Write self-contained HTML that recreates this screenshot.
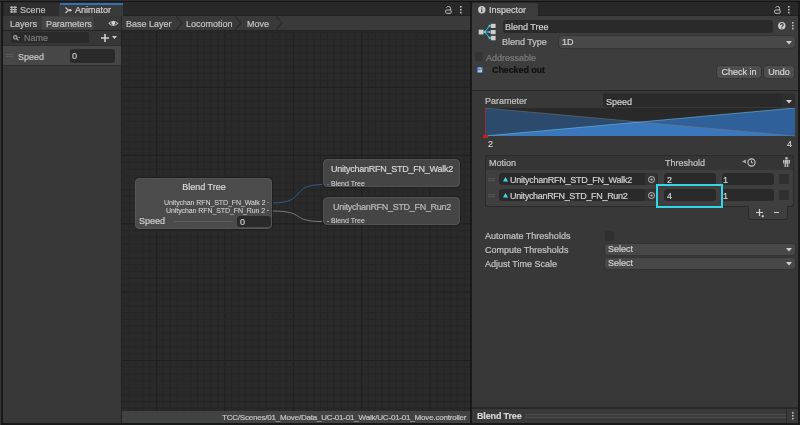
<!DOCTYPE html>
<html><head><meta charset="utf-8"><style>
html,body{margin:0;padding:0}
body{width:800px;height:425px;background:#191919;position:relative;overflow:hidden;font-family:"Liberation Sans",sans-serif}
body div, body svg{position:absolute}
.t{white-space:nowrap;-webkit-text-stroke:0.2px currentColor}
body>div.t{will-change:transform}
svg *{position:static}
</style></head><body>
<div style="left:0px;top:0px;width:800px;height:1px;background:#2e2e2e;"></div>
<div style="left:0px;top:0px;width:1px;height:425px;background:#363636;"></div>
<div style="left:0px;top:1px;width:800px;height:1px;background:#151515;"></div>
<div style="left:3px;top:2px;width:467px;height:13px;background:#282828;"></div>
<div style="left:3px;top:15px;width:467px;height:1px;background:#232323;"></div>
<div style="left:4px;top:3px;width:54.5px;height:12.5px;background:#2e2e2e;border-radius:2px 2px 0 0"></div>
<div style="left:59.3px;top:3px;width:63.5px;height:13px;background:#3a3a3a;border-radius:2px 2px 0 0"></div>
<div style="left:59.5px;top:3px;width:63px;height:2px;background:#3370b2;"></div>
<svg style="left:9.5px;top:6.1px" width="7" height="7" viewBox="0 0 7 7"><g stroke="#c4c4c4" stroke-width="1" fill="none"><path d="M0 1.3H7M0 3.6H7M0 5.9H7M1.8 0V7M4.9 0V7"/></g></svg>
<div class="t" style="top:6px;font-size:9px;line-height:9px;color:#bdbdbd;left:20.3px;">Scene</div>
<svg style="left:65px;top:6.5px" width="7" height="7" viewBox="0 0 7 7"><g stroke="#c8c8c8" stroke-width="1.2" fill="none"><path d="M0.5 0.5L3.5 3.2L0.5 6M3.5 3.2H6"/></g><circle cx="5.3" cy="3.2" r="1.3" fill="#c8c8c8"/></svg>
<div class="t" style="top:6px;font-size:9px;line-height:9px;color:#d2d2d2;left:75px;">Animator</div>
<svg style="left:445px;top:5.5px" width="8" height="8" viewBox="0 0 8 8"><g stroke="#bdbdbd" stroke-width="1" fill="none"><path d="M1.4 1.6Q2 0.5 3.6 0.5Q5.6 0.5 5.6 2.4V4"/><rect x="0.6" y="4" width="5.6" height="3.3" rx="1"/></g></svg>
<svg style="left:460px;top:6px" width="2" height="8" viewBox="0 0 2 8"><g fill="#bdbdbd"><rect x="0" y="0" width="1.6" height="1.6"/><rect x="0" y="2.9" width="1.6" height="1.6"/><rect x="0" y="5.8" width="1.6" height="1.6"/></g></svg>
<div style="left:3px;top:16px;width:467px;height:14px;background:#3c3c3c;"></div>
<div style="left:3px;top:16px;width:118px;height:14px;background:#383838;"></div>
<div style="left:6px;top:16px;width:34px;height:14px;background:#3a3a3a;"></div>
<div style="left:41.3px;top:16px;width:52.7px;height:14px;background:#454545;box-shadow:inset 0 0 0 0.6px #3a3a3a"></div>
<div class="t" style="top:19.5px;font-size:9px;line-height:9px;color:#c4c4c4;left:9.75px;">Layers</div>
<div class="t" style="top:19.5px;font-size:9px;line-height:9px;color:#c4c4c4;letter-spacing:-0.08px;left:46.0px;">Parameters</div>
<svg style="left:107.7px;top:20.3px" width="11" height="7" viewBox="0 0 11 7"><path d="M0.2 3.3Q5.3 -2 10.5 3.3Q5.3 8.6 0.2 3.3Z" fill="#cfcfcf"/><path d="M1.6 3.3Q5.3 -0.6 9.1 3.3Q5.3 7.2 1.6 3.3Z" fill="#3a3a3a"/><circle cx="5.3" cy="2.9" r="2" fill="#d4d4d4"/></svg>
<div style="left:121px;top:16px;width:1px;height:14px;background:#2a2a2a;"></div>
<div style="left:122px;top:16px;width:348px;height:14px;background:#3a3a3a;"></div>
<div class="t" style="top:20px;font-size:9px;line-height:9px;color:#c4c4c4;left:125.5px;">Base Layer</div>
<div class="t" style="top:20px;font-size:9px;line-height:9px;color:#c4c4c4;left:185.5px;">Locomotion</div>
<div class="t" style="top:20px;font-size:9px;line-height:9px;color:#c4c4c4;left:247.3px;">Move</div>
<svg style="left:175.7px;top:16px" width="7" height="14" viewBox="0 0 7 14"><path d="M0 0L6 7L0 14" stroke="#2a2a2a" stroke-width="1.2" fill="none"/></svg>
<svg style="left:235.2px;top:16px" width="7" height="14" viewBox="0 0 7 14"><path d="M0 0L6 7L0 14" stroke="#2a2a2a" stroke-width="1.2" fill="none"/></svg>
<svg style="left:276px;top:16px" width="7" height="14" viewBox="0 0 7 14"><path d="M0 0L6 7L0 14" stroke="#2a2a2a" stroke-width="1.2" fill="none"/></svg>
<div style="left:3px;top:30px;width:467px;height:1px;background:#242424;"></div>
<div style="left:3px;top:31px;width:118px;height:392px;background:#383838;"></div>
<div style="left:3px;top:31px;width:118px;height:14px;background:#363636;"></div>
<div style="left:10.5px;top:32.2px;width:78px;height:10.8px;background:#2a2a2a;border-radius:3px"></div>
<svg style="left:12px;top:34px" width="9" height="8" viewBox="0 0 9 8"><circle cx="3.3" cy="3.3" r="1.7" stroke="#b0b0b0" stroke-width="1.1" fill="none"/><path d="M4.4 4.4L6.4 6.4" stroke="#b0b0b0" stroke-width="1.2"/><rect x="6.4" y="3" width="1.6" height="0.9" fill="#9a9a9a"/></svg>
<div class="t" style="top:34.2px;font-size:9px;line-height:9px;color:#7b7b7b;left:23.7px;">Name</div>
<svg style="left:101px;top:33.5px" width="8" height="8" viewBox="0 0 8 8"><path d="M4 0V8M0 4H8" stroke="#cfcfcf" stroke-width="1.6"/></svg>
<svg style="left:112px;top:36px" width="5" height="3" viewBox="0 0 5 3"><path d="M0 0H5L2.5 3Z" fill="#cfcfcf"/></svg>
<div style="left:3px;top:45px;width:118px;height:1px;background:#2e2e2e;"></div>
<div style="left:3px;top:46px;width:118px;height:19px;background:#474747;"></div>
<div style="left:6px;top:53.5px;width:7px;height:0.8px;background:#5a5a5a;"></div>
<div style="left:6px;top:55.5px;width:7px;height:0.8px;background:#5a5a5a;"></div>
<div class="t" style="top:52.5px;font-size:9px;line-height:9px;color:#c8c8c8;left:17.8px;">Speed</div>
<div style="left:70px;top:49px;width:45px;height:14px;background:#2a2a2a;border-radius:3px"></div>
<div class="t" style="top:51.5px;font-size:9px;line-height:9px;color:#c8c8c8;left:72px;">0</div>
<div style="left:3px;top:65px;width:118px;height:1px;background:#2e2e2e;"></div>
<div style="left:121px;top:31px;width:1px;height:392px;background:#232323;"></div>
<div style="left:122px;top:31px;width:348px;height:379.5px;background:#2a2a2a;overflow:hidden">
<svg width="348" height="380" style="left:0;top:0"><rect x="-0.08" y="0" width="1" height="380" fill="#262626"/><rect x="6.76" y="0" width="1" height="380" fill="#262626"/><rect x="13.59" y="0" width="1" height="380" fill="#262626"/><rect x="20.43" y="0" width="1" height="380" fill="#262626"/><rect x="27.26" y="0" width="1" height="380" fill="#262626"/><rect x="34.10" y="0" width="1" height="380" fill="#1f1f1f"/><rect x="40.94" y="0" width="1" height="380" fill="#262626"/><rect x="47.77" y="0" width="1" height="380" fill="#262626"/><rect x="54.60" y="0" width="1" height="380" fill="#262626"/><rect x="61.44" y="0" width="1" height="380" fill="#262626"/><rect x="68.27" y="0" width="1" height="380" fill="#262626"/><rect x="75.11" y="0" width="1" height="380" fill="#262626"/><rect x="81.94" y="0" width="1" height="380" fill="#262626"/><rect x="88.78" y="0" width="1" height="380" fill="#262626"/><rect x="95.62" y="0" width="1" height="380" fill="#262626"/><rect x="102.45" y="0" width="1" height="380" fill="#1f1f1f"/><rect x="109.28" y="0" width="1" height="380" fill="#262626"/><rect x="116.12" y="0" width="1" height="380" fill="#262626"/><rect x="122.95" y="0" width="1" height="380" fill="#262626"/><rect x="129.79" y="0" width="1" height="380" fill="#262626"/><rect x="136.62" y="0" width="1" height="380" fill="#262626"/><rect x="143.46" y="0" width="1" height="380" fill="#262626"/><rect x="150.29" y="0" width="1" height="380" fill="#262626"/><rect x="157.13" y="0" width="1" height="380" fill="#262626"/><rect x="163.97" y="0" width="1" height="380" fill="#262626"/><rect x="170.80" y="0" width="1" height="380" fill="#1f1f1f"/><rect x="177.63" y="0" width="1" height="380" fill="#262626"/><rect x="184.47" y="0" width="1" height="380" fill="#262626"/><rect x="191.31" y="0" width="1" height="380" fill="#262626"/><rect x="198.14" y="0" width="1" height="380" fill="#262626"/><rect x="204.98" y="0" width="1" height="380" fill="#262626"/><rect x="211.81" y="0" width="1" height="380" fill="#262626"/><rect x="218.64" y="0" width="1" height="380" fill="#262626"/><rect x="225.48" y="0" width="1" height="380" fill="#262626"/><rect x="232.31" y="0" width="1" height="380" fill="#262626"/><rect x="239.15" y="0" width="1" height="380" fill="#1f1f1f"/><rect x="245.99" y="0" width="1" height="380" fill="#262626"/><rect x="252.82" y="0" width="1" height="380" fill="#262626"/><rect x="259.65" y="0" width="1" height="380" fill="#262626"/><rect x="266.49" y="0" width="1" height="380" fill="#262626"/><rect x="273.32" y="0" width="1" height="380" fill="#262626"/><rect x="280.16" y="0" width="1" height="380" fill="#262626"/><rect x="287.00" y="0" width="1" height="380" fill="#262626"/><rect x="293.83" y="0" width="1" height="380" fill="#262626"/><rect x="300.66" y="0" width="1" height="380" fill="#262626"/><rect x="307.50" y="0" width="1" height="380" fill="#1f1f1f"/><rect x="314.34" y="0" width="1" height="380" fill="#262626"/><rect x="321.17" y="0" width="1" height="380" fill="#262626"/><rect x="328.00" y="0" width="1" height="380" fill="#262626"/><rect x="334.84" y="0" width="1" height="380" fill="#262626"/><rect x="341.67" y="0" width="1" height="380" fill="#262626"/><rect x="0" y="0.92" width="348" height="1" fill="#262626"/><rect x="0" y="7.75" width="348" height="1" fill="#262626"/><rect x="0" y="14.59" width="348" height="1" fill="#262626"/><rect x="0" y="21.42" width="348" height="1" fill="#262626"/><rect x="0" y="28.26" width="348" height="1" fill="#262626"/><rect x="0" y="35.09" width="348" height="1" fill="#262626"/><rect x="0" y="41.93" width="348" height="1" fill="#262626"/><rect x="0" y="48.77" width="348" height="1" fill="#262626"/><rect x="0" y="55.60" width="348" height="1" fill="#1f1f1f"/><rect x="0" y="62.43" width="348" height="1" fill="#262626"/><rect x="0" y="69.27" width="348" height="1" fill="#262626"/><rect x="0" y="76.10" width="348" height="1" fill="#262626"/><rect x="0" y="82.94" width="348" height="1" fill="#262626"/><rect x="0" y="89.77" width="348" height="1" fill="#262626"/><rect x="0" y="96.61" width="348" height="1" fill="#262626"/><rect x="0" y="103.44" width="348" height="1" fill="#262626"/><rect x="0" y="110.28" width="348" height="1" fill="#262626"/><rect x="0" y="117.12" width="348" height="1" fill="#262626"/><rect x="0" y="123.95" width="348" height="1" fill="#1f1f1f"/><rect x="0" y="130.78" width="348" height="1" fill="#262626"/><rect x="0" y="137.62" width="348" height="1" fill="#262626"/><rect x="0" y="144.45" width="348" height="1" fill="#262626"/><rect x="0" y="151.29" width="348" height="1" fill="#262626"/><rect x="0" y="158.12" width="348" height="1" fill="#262626"/><rect x="0" y="164.96" width="348" height="1" fill="#262626"/><rect x="0" y="171.79" width="348" height="1" fill="#262626"/><rect x="0" y="178.63" width="348" height="1" fill="#262626"/><rect x="0" y="185.47" width="348" height="1" fill="#262626"/><rect x="0" y="192.30" width="348" height="1" fill="#1f1f1f"/><rect x="0" y="199.13" width="348" height="1" fill="#262626"/><rect x="0" y="205.97" width="348" height="1" fill="#262626"/><rect x="0" y="212.81" width="348" height="1" fill="#262626"/><rect x="0" y="219.64" width="348" height="1" fill="#262626"/><rect x="0" y="226.48" width="348" height="1" fill="#262626"/><rect x="0" y="233.31" width="348" height="1" fill="#262626"/><rect x="0" y="240.14" width="348" height="1" fill="#262626"/><rect x="0" y="246.98" width="348" height="1" fill="#262626"/><rect x="0" y="253.81" width="348" height="1" fill="#262626"/><rect x="0" y="260.65" width="348" height="1" fill="#1f1f1f"/><rect x="0" y="267.49" width="348" height="1" fill="#262626"/><rect x="0" y="274.32" width="348" height="1" fill="#262626"/><rect x="0" y="281.15" width="348" height="1" fill="#262626"/><rect x="0" y="287.99" width="348" height="1" fill="#262626"/><rect x="0" y="294.82" width="348" height="1" fill="#262626"/><rect x="0" y="301.66" width="348" height="1" fill="#262626"/><rect x="0" y="308.50" width="348" height="1" fill="#262626"/><rect x="0" y="315.33" width="348" height="1" fill="#262626"/><rect x="0" y="322.16" width="348" height="1" fill="#262626"/><rect x="0" y="329.00" width="348" height="1" fill="#1f1f1f"/><rect x="0" y="335.84" width="348" height="1" fill="#262626"/><rect x="0" y="342.67" width="348" height="1" fill="#262626"/><rect x="0" y="349.50" width="348" height="1" fill="#262626"/><rect x="0" y="356.34" width="348" height="1" fill="#262626"/><rect x="0" y="363.17" width="348" height="1" fill="#262626"/><rect x="0" y="370.01" width="348" height="1" fill="#262626"/><rect x="0" y="376.85" width="348" height="1" fill="#262626"/></svg>
</div>
<svg style="left:272px;top:170px" width="56" height="60" viewBox="0 0 56 60"><path d="M0 33C36 33 16 14.5 52 14.5" stroke="#2f5d8c" stroke-width="1" fill="none"/><path d="M0 41C36 41 16 51.6 52 51.6" stroke="#7a7a7a" stroke-width="1" fill="none"/></svg>
<div style="left:134.5px;top:176.8px;width:138.5px;height:53px;background:#1f1f1f;border-radius:5px"></div>
<div style="left:135.2px;top:177.5px;width:137px;height:51.5px;background:#4b4b4b;border-radius:4px;border:1px solid #565656;box-sizing:border-box"></div>
<div class="t" style="top:182.8px;font-size:9px;line-height:9px;color:#d8d8d8;left:3.8000000000000114px;width:400px;text-align:center;">Blend Tree</div>
<div class="t" style="top:198.8px;font-size:7px;line-height:7px;color:#d8d8d8;letter-spacing:-0.08px;-webkit-text-stroke:0.05px currentColor;right:535px;">Unitychan RFN_STD_FN_Walk 2</div>
<div class="t" style="top:206.8px;font-size:7px;line-height:7px;color:#d8d8d8;letter-spacing:-0.08px;-webkit-text-stroke:0.05px currentColor;right:535px;">Unitychan RFN_STD_FN_Run 2</div>
<div style="left:267px;top:202.3px;width:2px;height:1px;background:#4a7ab0;"></div>
<div style="left:267px;top:210.3px;width:2px;height:1px;background:#a0a0a0;"></div>
<div class="t" style="top:217.2px;font-size:9px;line-height:9px;color:#cfcfcf;left:138.9px;">Speed</div>
<div style="left:173.6px;top:221px;width:59.3px;height:1px;background:#5e5e5e;"></div>
<div style="left:236.7px;top:215.6px;width:34px;height:11.7px;background:#2a2a2a;border-radius:3px"></div>
<div class="t" style="top:217.8px;font-size:9px;line-height:9px;color:#cfcfcf;left:240px;">0</div>
<div style="left:322.4px;top:158px;width:139px;height:30.3px;background:#1f1f1f;border-radius:5px"></div>
<div style="left:323.2px;top:158.8px;width:137.3px;height:28.6px;background:#454545;border-radius:4px;border:1px solid #535353;box-sizing:border-box"></div>
<div class="t" style="top:165.0px;font-size:9px;line-height:9px;color:#d6d6d6;letter-spacing:-0.25px;left:191.8px;width:400px;text-align:center;">UnitychanRFN_STD_FN_Walk2</div>
<div class="t" style="top:180px;font-size:7px;line-height:7px;color:#d6d6d6;-webkit-text-stroke:0.05px currentColor;left:331.3px;">Blend Tree</div>
<div style="left:326.5px;top:184px;width:2px;height:1px;background:#4a7ab0;"></div>
<div style="left:322.4px;top:196px;width:139px;height:29.7px;background:#1f1f1f;border-radius:5px"></div>
<div style="left:323.2px;top:196.8px;width:137.3px;height:28px;background:#454545;border-radius:4px;border:1px solid #535353;box-sizing:border-box"></div>
<div class="t" style="top:203.0px;font-size:9px;line-height:9px;color:#bcbcbc;letter-spacing:-0.3px;left:192px;width:400px;text-align:center;">UnitychanRFN_STD_FN_Run2</div>
<div class="t" style="top:217.3px;font-size:7px;line-height:7px;color:#d6d6d6;-webkit-text-stroke:0.05px currentColor;left:331.3px;">Blend Tree</div>
<div style="left:326.5px;top:221.2px;width:2px;height:1px;background:#a0a0a0;"></div>
<div style="left:122px;top:410.5px;width:348px;height:12px;background:#414242;"></div>
<div class="t" style="top:414px;font-size:8px;line-height:8px;color:#c4c4c4;letter-spacing:-0.2px;right:333.5px;">TCC/Scenes/01_Move/Data_UC-01-01_Walk/UC-01-01_Move.controller</div>
<div style="left:472px;top:2px;width:326px;height:13px;background:#282828;"></div>
<div style="left:472px;top:15px;width:326px;height:1px;background:#232323;"></div>
<div style="left:472.2px;top:3px;width:65.7px;height:13px;background:#3c3c3c;border-radius:2px 2px 0 0"></div>
<svg style="left:477.7px;top:5.9px" width="8" height="8" viewBox="0 0 8 8"><circle cx="3.8" cy="3.8" r="3.7" fill="#cdcdcd"/><rect x="3.2" y="3.2" width="1.2" height="3" fill="#3c3c3c"/><rect x="3.2" y="1.4" width="1.2" height="1.1" fill="#3c3c3c"/></svg>
<div class="t" style="top:5.8px;font-size:9px;line-height:9px;color:#d2d2d2;left:489px;">Inspector</div>
<svg style="left:773.5px;top:5.5px" width="8" height="8" viewBox="0 0 8 8"><g stroke="#bdbdbd" stroke-width="1" fill="none"><path d="M1.4 1.6Q2 0.5 3.6 0.5Q5.6 0.5 5.6 2.4V4"/><rect x="0.6" y="4" width="5.6" height="3.3" rx="1"/></g></svg>
<svg style="left:788px;top:6px" width="2" height="8" viewBox="0 0 2 8"><g fill="#bdbdbd"><rect x="0" y="0" width="1.6" height="1.6"/><rect x="0" y="2.9" width="1.6" height="1.6"/><rect x="0" y="5.8" width="1.6" height="1.6"/></g></svg>
<div style="left:472px;top:16px;width:326px;height:391px;background:#383838;"></div>
<div style="left:472px;top:16px;width:326px;height:74px;background:#3d3d3d;"></div>
<svg style="left:474px;top:20px" width="26" height="25" viewBox="0 0 26 25"><g fill="#cdcdcd"><rect x="4.7" y="9.7" width="4.8" height="4.7"/><rect x="16.8" y="3.8" width="4.8" height="4.2"/><rect x="16.8" y="10" width="4.8" height="4.2"/><rect x="16.8" y="15.9" width="4.8" height="4.4"/></g><g stroke="#3ad8ee" stroke-width="0.9" fill="none"><path d="M15.6 5.9L10.6 12L15.6 17.9M10.6 12H15.6"/></g><g fill="#3ad8ee"><circle cx="10.6" cy="12" r="1.2"/><circle cx="15.6" cy="5.9" r="1.1"/><circle cx="15.6" cy="12" r="1.1"/><circle cx="15.6" cy="17.9" r="1.1"/></g></svg>
<div style="left:502.8px;top:20.2px;width:270px;height:12.8px;background:#2a2a2a;border-radius:3px"></div>
<div class="t" style="top:23px;font-size:9px;line-height:9px;color:#d2d2d2;left:505.25px;">Blend Tree</div>
<svg style="left:777.7px;top:21.8px" width="8" height="8" viewBox="0 0 8 8"><circle cx="3.8" cy="3.8" r="3.7" fill="#cfcfcf"/><path d="M2.4 3A1.4 1.3 0 1 1 4.4 4.1Q3.8 4.5 3.8 5.2" stroke="#383838" stroke-width="1.1" fill="none"/><rect x="3.25" y="5.7" width="1.1" height="1" fill="#383838"/></svg>
<svg style="left:792px;top:22px" width="2" height="8" viewBox="0 0 2 8"><g fill="#bdbdbd"><rect x="0" y="0" width="1.6" height="1.6"/><rect x="0" y="2.9" width="1.6" height="1.6"/><rect x="0" y="5.8" width="1.6" height="1.6"/></g></svg>
<div class="t" style="top:38.2px;font-size:9px;line-height:9px;color:#c4c4c4;left:501.9px;">Blend Type</div>
<div style="left:559.2px;top:36px;width:235.6px;height:11.9px;background:#484848;border-radius:3px;box-shadow:0 0 0 0.6px #2e2e2e"></div>
<div class="t" style="top:38.3px;font-size:9px;line-height:9px;color:#d2d2d2;left:561.5px;">1D</div>
<svg style="left:785.5px;top:40.5px" width="6" height="4" viewBox="0 0 6 4"><path d="M0 0H6L3 3.5Z" fill="#d0d0d0"/></svg>
<div style="left:474.5px;top:52.2px;width:8.7px;height:9.3px;background:#343434;border-radius:1px"></div>
<div class="t" style="top:54.2px;font-size:9px;line-height:9px;color:#7d7d7d;left:486px;">Addressable</div>
<svg style="left:476.9px;top:66.6px" width="6" height="6" viewBox="0 0 6 6"><rect x="0" y="0" width="5.7" height="5.8" fill="#3f78c0"/><path d="M1.3 2.2Q1.5 1 2.9 1Q4.3 1 4.3 2.4V4.8M1.3 3.8H4.3V4.8H1.3Z" stroke="#e0e0e0" stroke-width="0.9" fill="none"/></svg>
<div class="t" style="top:65.5px;font-size:9px;line-height:9px;color:#111111;font-weight:700;letter-spacing:-0.1px;left:492px;">Checked out</div>
<div style="left:716.8px;top:66.2px;width:44.2px;height:11.5px;background:#4e4e4e;border-radius:3px;box-shadow:0 0 0 0.6px #2e2e2e"></div>
<div class="t" style="top:67.8px;font-size:9px;line-height:9px;color:#d6d6d6;left:538.9px;width:400px;text-align:center;">Check in</div>
<div style="left:764.2px;top:66.2px;width:29.8px;height:11.5px;background:#4e4e4e;border-radius:3px;box-shadow:0 0 0 0.6px #2e2e2e"></div>
<div class="t" style="top:67.8px;font-size:9px;line-height:9px;color:#d6d6d6;left:579.1px;width:400px;text-align:center;">Undo</div>
<div style="left:472px;top:90px;width:326px;height:1px;background:#262626;"></div>
<div class="t" style="top:97.2px;font-size:9px;line-height:9px;color:#c4c4c4;left:485.3px;">Parameter</div>
<div style="left:603.2px;top:93px;width:191.5px;height:14.2px;background:#303030;border-radius:3px"></div>
<div style="left:603.2px;top:94px;width:191.5px;height:13px;background:#2a2a2a;border-radius:3px"></div>
<div class="t" style="top:97.6px;font-size:9px;line-height:9px;color:#d2d2d2;left:605.5px;">Speed</div>
<div style="left:782px;top:94px;width:12.7px;height:13px;background:#2e2e2e;border-radius:0 3px 3px 0"></div>
<svg style="left:785.5px;top:99.5px" width="6" height="4" viewBox="0 0 6 4"><path d="M0 0H6L3 3.5Z" fill="#d0d0d0"/></svg>
<svg style="left:485px;top:108px" width="311" height="29" viewBox="0 0 311 29"><rect x="0" y="0" width="310" height="28" fill="#292929"/><polygon points="0,0 310,28 0,28" fill="#2b4a6c"/><polygon points="0,28 310,0 310,28" fill="#30609a"/><polygon points="0,28 155,14 310,28" fill="#3a77bc"/><path d="M0 0L310 28" stroke="#7a7a80" stroke-width="0.5" fill="none"/><path d="M0 28L310 0" stroke="#70b8e0" stroke-width="0.6" fill="none"/><path d="M0.5 0V28" stroke="#d02020" stroke-width="1" stroke-dasharray="1.5 1" fill="none"/></svg>
<div style="left:483.2px;top:135px;width:4.8px;height:3px;background:#c81e1e;"></div>
<div class="t" style="top:140px;font-size:9px;line-height:9px;color:#d0d0d0;left:487.5px;">2</div>
<div class="t" style="top:140px;font-size:9px;line-height:9px;color:#d0d0d0;right:8px;">4</div>
<div style="left:484.5px;top:155px;width:309.5px;height:15px;background:#353535;border-radius:3px 3px 0 0;border:1px solid #2a2a2a;border-bottom:none;box-sizing:border-box"></div>
<div class="t" style="top:158.5px;font-size:9px;line-height:9px;color:#c4c4c4;left:489px;">Motion</div>
<div class="t" style="top:158.5px;font-size:9px;line-height:9px;color:#c4c4c4;left:665px;">Threshold</div>
<svg style="left:742px;top:157.7px" width="14" height="9" viewBox="0 0 14 9"><path d="M0 3.5L4 1.5V5.5Z" fill="#a8a8a8"/><circle cx="9.5" cy="4.5" r="3.6" stroke="#c8c8c8" stroke-width="1.1" fill="none"/><path d="M9.5 2.5V4.8H11" stroke="#c8c8c8" stroke-width="1" fill="none"/></svg>
<svg style="left:781.5px;top:157px" width="9" height="10" viewBox="0 0 9 10"><g fill="#b8b8b8"><circle cx="4.5" cy="1.3" r="1.3"/><rect x="2.5" y="2.8" width="4" height="4"/><rect x="1" y="3" width="1.2" height="3.5"/><rect x="6.8" y="3" width="1.2" height="3.5"/><rect x="2.6" y="6.5" width="1.5" height="3.5"/><rect x="4.9" y="6.5" width="1.5" height="3.5"/></g></svg>
<div style="left:484.5px;top:170px;width:309.5px;height:36.5px;background:#3f3f3f;border:1px solid #2a2a2a;border-top:none;box-sizing:border-box;border-radius:0 0 3px 3px"></div>
<div style="left:488px;top:178.2px;width:7px;height:0.8px;background:#555555;"></div>
<div style="left:488px;top:180.2px;width:7px;height:0.8px;background:#555555;"></div>
<div style="left:499px;top:173.2px;width:158.5px;height:11.8px;background:#2a2a2a;border-radius:3px"></div>
<div style="left:644.8px;top:173.2px;width:12.7px;height:11.8px;background:#333333;border-radius:0 3px 3px 0"></div>
<svg style="left:647.5px;top:175.6px" width="7" height="7" viewBox="0 0 7 7"><circle cx="3.5" cy="3.5" r="3" stroke="#c8c8c8" stroke-width="0.9" fill="none"/><circle cx="3.5" cy="3.5" r="1.1" fill="#c8c8c8"/></svg>
<svg style="left:503px;top:176.5px" width="5" height="5" viewBox="0 0 5 5"><path d="M2.5 0L5 4.5H0Z" fill="#3fd6ea"/></svg>
<div class="t" style="top:176.0px;font-size:9px;line-height:9px;color:#d2d2d2;letter-spacing:-0.25px;left:509.8px;">UnitychanRFN_STD_FN_Walk2</div>
<div style="left:663.8px;top:173.2px;width:52px;height:11.8px;background:#2a2a2a;border-radius:3px"></div>
<div class="t" style="top:176.0px;font-size:9px;line-height:9px;color:#d2d2d2;left:666.5px;">2</div>
<div style="left:721.5px;top:173.2px;width:52px;height:11.8px;background:#2a2a2a;border-radius:3px"></div>
<div class="t" style="top:176.0px;font-size:9px;line-height:9px;color:#d2d2d2;left:723px;">1</div>
<div style="left:779px;top:174.0px;width:10px;height:10px;background:#2f2f2f;border-radius:2px"></div>
<div style="left:488px;top:194.3px;width:7px;height:0.8px;background:#555555;"></div>
<div style="left:488px;top:196.3px;width:7px;height:0.8px;background:#555555;"></div>
<div style="left:499px;top:189.3px;width:158.5px;height:11.8px;background:#2a2a2a;border-radius:3px"></div>
<div style="left:644.8px;top:189.3px;width:12.7px;height:11.8px;background:#333333;border-radius:0 3px 3px 0"></div>
<svg style="left:647.5px;top:191.70000000000002px" width="7" height="7" viewBox="0 0 7 7"><circle cx="3.5" cy="3.5" r="3" stroke="#c8c8c8" stroke-width="0.9" fill="none"/><circle cx="3.5" cy="3.5" r="1.1" fill="#c8c8c8"/></svg>
<svg style="left:503px;top:192.60000000000002px" width="5" height="5" viewBox="0 0 5 5"><path d="M2.5 0L5 4.5H0Z" fill="#3fd6ea"/></svg>
<div class="t" style="top:192.10000000000002px;font-size:9px;line-height:9px;color:#d2d2d2;letter-spacing:-0.32px;left:509.8px;">UnitychanRFN_STD_FN_Run2</div>
<div style="left:663.8px;top:189.3px;width:52px;height:11.8px;background:#2a2a2a;border-radius:3px"></div>
<div class="t" style="top:192.10000000000002px;font-size:9px;line-height:9px;color:#d2d2d2;left:666.5px;">4</div>
<div style="left:721.5px;top:189.3px;width:52px;height:11.8px;background:#2a2a2a;border-radius:3px"></div>
<div class="t" style="top:192.10000000000002px;font-size:9px;line-height:9px;color:#d2d2d2;left:723px;">1</div>
<div style="left:779px;top:190.10000000000002px;width:10px;height:10px;background:#2f2f2f;border-radius:2px"></div>
<div style="left:656.4px;top:183.8px;width:66.6px;height:24.7px;background:transparent;border:2px solid #35d4e6;box-sizing:border-box"></div>
<div style="left:748.3px;top:206px;width:39.7px;height:14px;background:#3f3f3f;border:1px solid #2a2a2a;border-top:none;box-sizing:border-box;border-radius:0 0 3px 3px"></div>
<svg style="left:756px;top:208.5px" width="9" height="9" viewBox="0 0 9 9"><path d="M3.5 0V7M0 3.5H7" stroke="#d0d0d0" stroke-width="1.2"/><rect x="5.7" y="6.2" width="2" height="2" fill="#d0d0d0"/></svg>
<div style="left:773.8px;top:212px;width:5.7px;height:1.2px;background:#d0d0d0;"></div>
<div class="t" style="top:232px;font-size:9px;line-height:9px;color:#c4c4c4;left:485px;">Automate Thresholds</div>
<div style="left:604.6px;top:230.9px;width:9.5px;height:9.7px;background:#2f2f2f;border-radius:2px"></div>
<div class="t" style="top:246.1px;font-size:9px;line-height:9px;color:#c4c4c4;left:485px;">Compute Thresholds</div>
<div style="left:605px;top:244.2px;width:189.5px;height:10.9px;background:#484848;border-radius:3px;box-shadow:0 0 0 0.6px #2e2e2e"></div>
<div class="t" style="top:245px;font-size:9px;line-height:9px;color:#d2d2d2;left:607.5px;">Select</div>
<svg style="left:785.5px;top:248px" width="6" height="4" viewBox="0 0 6 4"><path d="M0 0H6L3 3.5Z" fill="#d0d0d0"/></svg>
<div class="t" style="top:259.8px;font-size:9px;line-height:9px;color:#c4c4c4;left:485px;">Adjust Time Scale</div>
<div style="left:605px;top:258px;width:189.5px;height:11px;background:#484848;border-radius:3px;box-shadow:0 0 0 0.6px #2e2e2e"></div>
<div class="t" style="top:259px;font-size:9px;line-height:9px;color:#d2d2d2;left:607.5px;">Select</div>
<svg style="left:785.5px;top:262px" width="6" height="4" viewBox="0 0 6 4"><path d="M0 0H6L3 3.5Z" fill="#d0d0d0"/></svg>
<div style="left:472px;top:407px;width:326px;height:2px;background:#282828;"></div>
<div style="left:472px;top:409px;width:326px;height:13.5px;background:#3a3a3a;"></div>
<div class="t" style="top:412.1px;font-size:9px;line-height:9px;color:#d6d6d6;font-weight:700;letter-spacing:-0.15px;left:476.9px;">Blend Tree</div>
<div style="left:525px;top:414px;width:261px;height:1px;background:#4e4e4e;"></div>
<div style="left:525px;top:417px;width:261px;height:1px;background:#4e4e4e;"></div>
<div style="left:786px;top:409px;width:1px;height:13.5px;background:#2c2c2c;"></div>
<svg style="left:791.5px;top:412px" width="2" height="8" viewBox="0 0 2 8"><g fill="#bdbdbd"><rect x="0" y="0" width="1.6" height="1.6"/><rect x="0" y="2.9" width="1.6" height="1.6"/><rect x="0" y="5.8" width="1.6" height="1.6"/></g></svg>
</body></html>
